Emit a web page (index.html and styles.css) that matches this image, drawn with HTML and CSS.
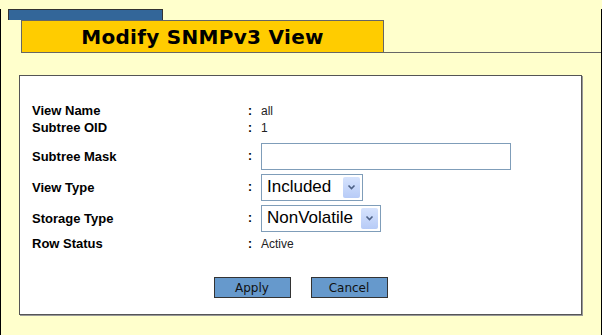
FILE: index.html
```html
<!DOCTYPE html>
<html lang="en">
<head>
  <meta charset="UTF-8">
  <title>Modify SNMPv3 View</title>
  <link rel="stylesheet" href="styles.css">
</head>
<body>
  <div class="page">
    <div class="tab"></div>
    <div class="title-row">
      <h1 class="title">Modify SNMPv3 View</h1>
    </div>

    <div class="panel">
      <div class="row">
        <span class="label">View Name</span>
        <span class="colon">:</span>
        <span class="value">all</span>
      </div>
      <div class="row">
        <span class="label">Subtree OID</span>
        <span class="colon">:</span>
        <span class="value">1</span>
      </div>
      <div class="row field mask-row">
        <span class="label">Subtree Mask</span>
        <span class="colon">:</span>
        <input class="text-input" type="text">
      </div>
      <div class="row field">
        <span class="label">View Type</span>
        <span class="colon">:</span>
        <div class="select select-type">
          <span class="select-text">Included</span>
          <span class="select-arrow">
            <svg width="9" height="6" viewBox="0 0 9 6"><path d="M1.5 1.5 L4.5 4.5 L7.5 1.5" fill="none" stroke="#4d6185" stroke-width="1.6"/></svg>
          </span>
        </div>
      </div>
      <div class="row field">
        <span class="label">Storage Type</span>
        <span class="colon">:</span>
        <div class="select select-storage">
          <span class="select-text">NonVolatile</span>
          <span class="select-arrow">
            <svg width="9" height="6" viewBox="0 0 9 6"><path d="M1.5 1.5 L4.5 4.5 L7.5 1.5" fill="none" stroke="#4d6185" stroke-width="1.6"/></svg>
          </span>
        </div>
      </div>
      <div class="row status-row">
        <span class="label">Row Status</span>
        <span class="colon">:</span>
        <span class="value">Active</span>
      </div>

      <div class="buttons">
        <button class="btn">Apply</button>
        <button class="btn">Cancel</button>
      </div>
    </div>
  </div>
</body>
</html>
```

FILE: styles.css
```css
/* general */
body {
  margin: 0;
  background-color: #ffffcc;
  font-family: 'Liberation Sans', Arial, sans-serif;
}

.page {
  box-sizing: border-box;
  width: 602px;
  height: 334px;
  border-left: 1px solid #000;
  border-right: 1px solid #000;
  border-bottom: 1px solid #000;
  background-color: #ffffcc;
}

/* header */
.tab {
  box-sizing: border-box;
  width: 155px;
  height: 11px;
  margin: 9px 0 0 7px;
  background-color: #336699;
  border: 1px solid #333;
  border-bottom: none;
}

.title-row {
  margin-left: 20px;
  border-bottom: 1px solid #666;
}

.title {
  box-sizing: border-box;
  width: 363px;
  height: 32px;
  margin: 0;
  background-color: #ffcc00;
  border: 1px solid #666;
  border-bottom: none;
  font-family: 'DejaVu Sans', Verdana, sans-serif;
  font-size: 20px;
  font-weight: bold;
  letter-spacing: 0.3px;
  line-height: 32px;
  text-align: center;
  color: #000;
}

/* panel */
.panel {
  box-sizing: border-box;
  width: 563px;
  height: 240px;
  margin: 22px 0 0 18px;
  padding: 26px 0 0 12px;
  background: #fff;
  border: 1px solid #555;
  box-shadow: 1px 1px 0 #999;
}

.row {
  display: flex;
  align-items: center;
  height: 17px;
  font-size: 12px;
}

.row.field {
  height: 28px;
  margin-top: 3px;
}

.row.mask-row {
  margin-top: 6px;
}

.row.status-row {
  margin-top: 3px;
}

.label {
  width: 216px;
  font-size: 13px;
  font-weight: bold;
  color: #000;
}

.colon {
  width: 13px;
  font-weight: bold;
  color: #000;
}

.value {
  color: #222;
}

.text-input {
  box-sizing: border-box;
  width: 250px;
  height: 27px;
  margin: 0;
  border: 1px solid #7f9db9;
  background: #fff;
}

.select {
  box-sizing: border-box;
  display: flex;
  align-items: center;
  height: 27px;
  padding: 2px;
  border: 1px solid #7f9db9;
  background: #fff;
}

.select-type {
  width: 102px;
}

.select-storage {
  width: 120px;
}

.select-text {
  flex: 1;
  padding-left: 3px;
  font-size: 17px;
  white-space: nowrap;
  color: #000;
}

.select-arrow {
  display: flex;
  align-items: center;
  justify-content: center;
  flex-shrink: 0;
  width: 17px;
  height: 21px;
  border-radius: 2px;
  background: linear-gradient(#d6e3fd, #b7cbf7);
}

/* buttons */
.buttons {
  display: flex;
  justify-content: center;
  gap: 20px;
  margin: 25px 12px 0 0;
}

.btn {
  box-sizing: border-box;
  width: 77px;
  height: 21px;
  padding: 0;
  border: 1px solid #333;
  background-color: #6699cc;
  font-family: 'DejaVu Sans', Verdana, sans-serif;
  font-size: 12px;
  color: #111;
}
```
